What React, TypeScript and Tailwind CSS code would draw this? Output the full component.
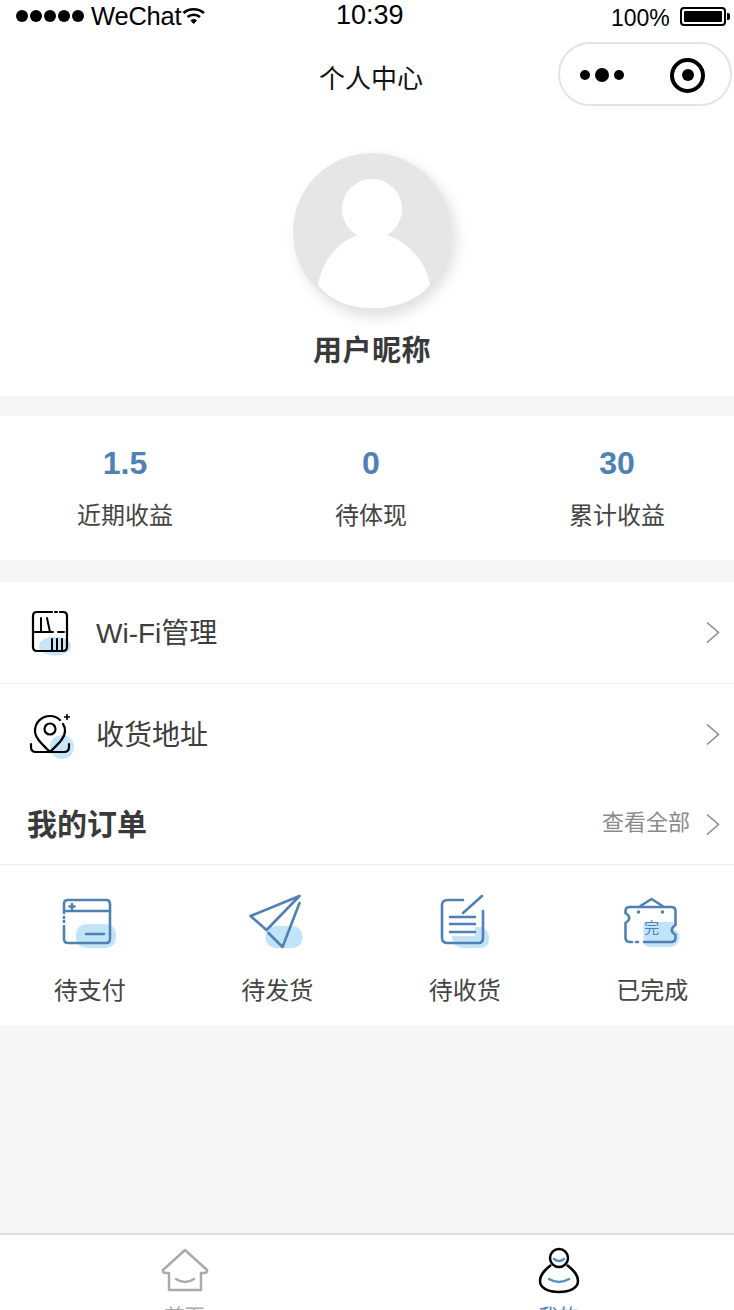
import { FC, ReactNode } from "react";

const font = "font-['Liberation_Sans','Noto_Sans_CJK_SC',sans-serif]";

const Chevron: FC = () => (
  <svg width="16" height="24" viewBox="0 0 16 24" fill="none" className="shrink-0">
    <path d="M2 1.500 L13.500 11.500 L2 21.500" stroke="#8c8c8c" strokeWidth="1.600" />
  </svg>
);

const StatusBar: FC = () => (
  <div className="relative h-[36px] shrink-0 text-black">
    <div className="absolute left-[16px] top-[6px] flex items-center">
      <div className="flex gap-[2px]">
        {[0, 1, 2, 3, 4].map((i) => (
          <span key={i} className="h-[12px] w-[12px] rounded-full bg-black" />
        ))}
      </div>
      <span className="ml-[7px] text-[25.5px] leading-[20px] tracking-[-0.2px]">WeChat</span>
      <svg width="24" height="18" viewBox="0 0 24 18" className="ml-[1px]" fill="none" stroke="#000">
        <path d="M1.500 6 C7 1 16 1 22 6" strokeWidth="2.600" />
        <path d="M5.500 10 C9 7 14.500 7 18 10" strokeWidth="2.600" />
        <path d="M9 13.500 L11.700 16.500 L14.500 13.500 C13 12 10.500 12 9 13.500 Z" fill="#000" strokeWidth="1" />
      </svg>
    </div>
    <span className="absolute left-[336px] top-[0px] text-[27px] leading-[30px]">10:39</span>
    <span className="absolute left-[611px] top-[7px] text-[23px] leading-[23px]">100%</span>
    <div className="absolute left-[680px] top-[7px] flex items-center">
      <div className="h-[19px] w-[46px] rounded-[4px] border-2 border-black p-[2px]">
        <div className="h-full w-full rounded-[1px] bg-black" />
      </div>
      <span className="ml-[1px] h-[7px] w-[3px] rounded-r-[2px] bg-black" />
    </div>
  </div>
);

const NavBar: FC = () => (
  <div className="relative h-[76px] shrink-0">
    <div className="ml-[8px] flex h-[86px] items-center justify-center text-[26px] leading-[30px] text-[#111]">
      个人中心
    </div>
    <div className="absolute left-[558px] top-[6px] flex h-[64px] w-[174px] items-center rounded-full border-2 border-[#e4e4e4] bg-white">
      <div className="ml-[20px] mt-[2px] flex items-center gap-[5px]">
        <span className="h-[10px] w-[10px] rounded-full bg-black" />
        <span className="h-[14px] w-[14px] rounded-full bg-black" />
        <span className="h-[10px] w-[10px] rounded-full bg-black" />
      </div>
      <div className="ml-[46px] mt-[2px] flex h-[35px] w-[35px] items-center justify-center rounded-full border-[4.5px] border-black">
        <span className="h-[12px] w-[12px] rounded-full bg-black" />
      </div>
    </div>
  </div>
);

const Profile: FC = () => (
  <div className="flex h-[284px] shrink-0 flex-col items-center pl-[10px] pt-[41px]">
    <div className="h-[158px] w-[158px] shrink-0 overflow-hidden rounded-full bg-[#e6e6e6] shadow-[5px_6px_14px_rgba(0,0,0,0.13)]">
      <svg width="158" height="158" viewBox="0 0 158 158" fill="#fff">
        <circle cx="79" cy="56" r="30" />
        <path d="M25 132 C30 103 52 80 79 80 C106 80 132 103 137 132 C125 147 103 155 79 155 C55 155 37 147 25 132 Z" />
      </svg>
    </div>
    <div className="mt-[22px] text-[29px] font-bold leading-[36px] tracking-[0.5px] text-[#3a3a3a]">
      用户昵称
    </div>
  </div>
);

const Stat: FC<{ value: string; label: string }> = ({ value, label }) => (
  <div className="flex w-[246px] shrink-0 flex-col items-center">
    <div className="text-[32px] font-bold leading-[36px] text-[#4f81b5]">{value}</div>
    <div className="mt-[19px] text-[24px] leading-[32px] text-[#444]">{label}</div>
  </div>
);

const Row: FC<{ icon: ReactNode; label: string; border?: boolean }> = ({ icon, label, border }) => (
  <div className={`flex items-center pl-[28px] pr-[13px] ${border ? "h-[102px] border-b border-[#eeeeee]" : "h-[101px]"}`}>
    <div className="w-[48px] shrink-0">{icon}</div>
    <div className="ml-[20px] mt-[2px] flex-1 text-[28px] leading-[34px] text-[#3d3d3d]">{label}</div>
    <Chevron />
  </div>
);

const WifiIcon: FC = () => (
  <svg width="48" height="48" viewBox="0 0 48 48" fill="none">
    <ellipse cx="27" cy="37" rx="16" ry="9.500" fill="#c5e6f8" />
    <path d="M24 3 H9 Q5 3 5 7 V38 Q5 42 9 42 H35 Q39 42 39 38 V7 Q39 3 35 3 H32 M27 3 H29" stroke="#000" strokeWidth="2.200" strokeLinecap="round" />
    <path d="M5 23 H25 M30 23 H36 M13 9 V23 M19 9 L22 23 M24 30 V42 M29 30 V42 M34 30 V42" stroke="#000" strokeWidth="2" strokeLinecap="round" />
  </svg>
);

const PinIcon: FC = () => (
  <svg width="48" height="48" viewBox="0 0 48 48" fill="none">
    <circle cx="34" cy="36" r="12" fill="#c5e6f8" />
    <path d="M22 41 C14 33 7 27 7 20 C7 11 14 5 22 5 C26 5 29 6 32 9 M35 13 C36.500 15 37 17 37 20 C37 27 30 33 22 41" stroke="#000" strokeWidth="2.200" strokeLinecap="round" />
    <circle cx="22" cy="18" r="5.500" stroke="#000" strokeWidth="2.200" />
    <path d="M3 33 V36 Q3 41 8 41 H36 Q41 41 41 36 V33" stroke="#000" strokeWidth="2.200" strokeLinecap="round" />
    <path d="M39 3 V9 M36 6 H42" stroke="#000" strokeWidth="1.600" />
  </svg>
);

const blue = "#4f81b5";
const blob = "#c2e4f9";

const PayIcon: FC = () => (
  <svg width="56" height="56" viewBox="0 0 56 56" fill="none" className="overflow-visible">
    <rect x="14" y="31" width="40" height="24" rx="10" fill={blob} />
    <path d="M2 20 V11 Q2 7 6 7 H44 Q48 7 48 11 V46 Q48 50 44 50 H6 Q2 50 2 46 V33" stroke={blue} strokeWidth="2.600" strokeLinecap="round" />
    <path d="M2 18 H48 M24 41 H42 M10 11 V16 M7.500 13.500 H12.500 M2 24 V25 M2 28 V29" stroke={blue} strokeWidth="2.600" strokeLinecap="round" />
  </svg>
);

const PlaneIcon: FC = () => (
  <svg width="56" height="56" viewBox="0 0 56 56" fill="none" className="overflow-visible">
    <rect x="16.500" y="33" width="37" height="22" rx="10" fill={blob} />
    <path d="M50.500 3 L1.500 23 L17.500 37 L50.500 3 M50.500 10 L33.500 54 L19.500 40" stroke={blue} strokeWidth="2.600" strokeLinecap="round" strokeLinejoin="round" />
  </svg>
);

const NoteIcon: FC = () => (
  <svg width="56" height="56" viewBox="0 0 56 56" fill="none" className="overflow-visible">
    <path d="M15 43 H38 V34 H44 Q52 36 52 46 Q52 55 42 55 H28 Q15 55 15 43 Z" fill={blob} />
    <path d="M26 7 H11 Q5 7 5 12 V45 Q5 50 11 50 H41 Q46 50 46 45 V18" stroke={blue} strokeWidth="2.600" strokeLinecap="round" />
    <path d="M45 3 L26 20 M13 24 H38 M13 31 H38 M13 39 H38" stroke={blue} strokeWidth="2.600" strokeLinecap="round" />
  </svg>
);

const TicketIcon: FC = () => (
  <div className="relative h-[56px] w-[56px]">
    <svg width="56" height="56" viewBox="0 0 56 56" fill="none" className="absolute inset-0 overflow-visible">
      <path d="M19.500 29 H46 Q50 29 50 31 V36 Q56 39 55.500 45 Q54 53 47 54 H26 Q19.500 54 19.500 47 Z" fill={blob} />
      <path d="M16.500 13 L27.500 6 L38.500 13" stroke={blue} strokeWidth="2.600" strokeLinejoin="round" strokeLinecap="round" />
      <path d="M6 14 H47 Q51.500 14 51.500 18 V32 Q44 37 51.500 42 V45 Q51.500 49 47 49 H20 M12 49 H14 M8 49 H6 Q1.500 49 1.500 45 V30 Q9 25 1.500 20 V18 Q1.500 14 6 14" stroke={blue} strokeWidth="2.600" strokeLinecap="round" />
      <circle cx="14.500" cy="19" r="1.800" fill={blue} />
      <circle cx="38.500" cy="19" r="1.800" fill={blue} />
    </svg>
    <span className="absolute left-[20px] top-[26px] text-[15px] leading-[18px] text-[#4f81b5]">完</span>
  </div>
);

const OrderItem: FC<{ icon: ReactNode; label: string }> = ({ icon, label }) => (
  <div className="flex w-[187.5px] shrink-0 flex-col items-center">
    <div className="flex h-[56px] items-center justify-center">{icon}</div>
    <div className="mt-[26px] text-[24px] leading-[32px] text-[#444]">{label}</div>
  </div>
);

const TabBar: FC = () => (
  <div className="flex h-[77px] shrink-0 border-t-2 border-[#dddddd] bg-white">
    <div className="flex w-[367px] flex-col items-center pl-[2px] pt-[14px]">
      <svg width="48" height="44" viewBox="0 0 48 44" fill="none" className="shrink-0">
        <path d="M24 1 L46 21 Q46.500 24 43 24 H40 V41 H8 V24 H5 Q1.500 24 2 21 Z" stroke="#aaaaaa" strokeWidth="2.500" strokeLinejoin="round" />
        <path d="M15 30 Q24 36 33 30" stroke="#aaaaaa" strokeWidth="2.500" strokeLinecap="round" />
      </svg>
      <span className="mt-[12px] text-[20px] leading-[24px] text-[#aaaaaa]">首页</span>
    </div>
    <div className="flex w-[367px] flex-col items-center pl-[16px] pt-[12px]">
      <svg width="42" height="48" viewBox="0 0 42 48" fill="none" className="shrink-0">
        <path d="M13 18 C8 22 2 27 2 34 C2 41 10 45 21 45 C32 45 40 41 40 34 C40 27 34 22 29 18" fill="#fff" stroke="#000" strokeWidth="2.500" />
        <circle cx="21" cy="11" r="9" fill="#fff" stroke="#000" strokeWidth="2.500" />
        <path d="M16 12 Q21 16 26 12 M11 32 Q21 38 31 32" stroke="#5a8fc8" strokeWidth="2.500" strokeLinecap="round" />
      </svg>
      <span className="mt-[10px] text-[20px] leading-[24px] text-[#4f81b5]">我的</span>
    </div>
  </div>
);

const App: FC = () => {
  return (
    <div className={`flex h-[1310px] w-[734px] flex-col overflow-hidden bg-[#f6f6f6] ${font}`}>
      <div className="bg-white">
        <StatusBar />
        <NavBar />
        <Profile />
      </div>

      <div className="mt-[20px] flex h-[144px] shrink-0 bg-white pl-[2px] pt-[29px]">
        <Stat value="1.5" label="近期收益" />
        <Stat value="0" label="待体现" />
        <Stat value="30" label="累计收益" />
      </div>

      <div className="mt-[22px] shrink-0 bg-white">
        <Row icon={<WifiIcon />} label="Wi-Fi管理" border />
        <Row icon={<PinIcon />} label="收货地址" />

        <div className="flex h-[80px] items-center border-b border-[#eeeeee] pl-[27px] pr-[13px]">
          <div className="flex-1 text-[30px] font-bold leading-[36px] text-[#3a3a3a]">我的订单</div>
          <span className="mb-[4px] mr-[15px] text-[22px] leading-[28px] text-[#8a8a8a]">查看全部</span>
          <Chevron />
        </div>

        <div className="-ml-[4px] flex h-[160px] pt-[28px]">
          <OrderItem icon={<PayIcon />} label="待支付" />
          <OrderItem icon={<PlaneIcon />} label="待发货" />
          <OrderItem icon={<NoteIcon />} label="待收货" />
          <OrderItem icon={<TicketIcon />} label="已完成" />
        </div>
      </div>

      <div className="flex-1" />
      <TabBar />
    </div>
  );
};

export default App;
